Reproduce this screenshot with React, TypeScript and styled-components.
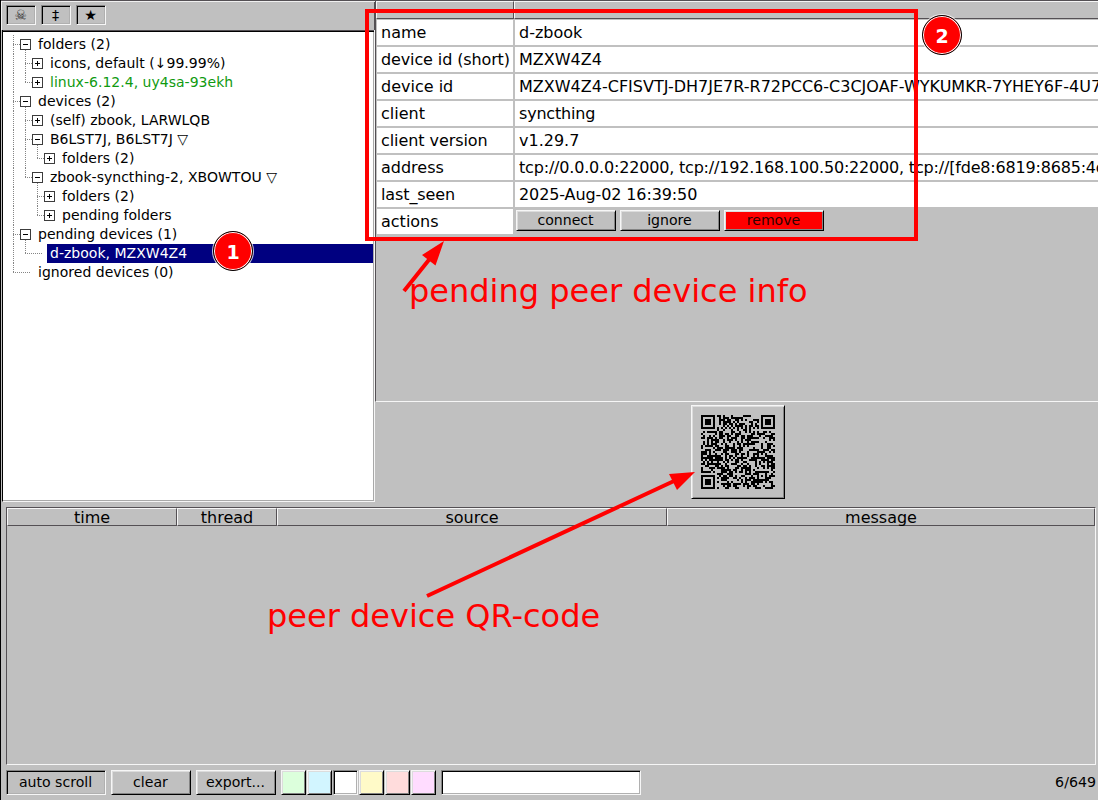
import React from "react";
import styled, { createGlobalStyle, css } from "styled-components";

const Global = createGlobalStyle`
  *, *::before, *::after { box-sizing: border-box; }
  html, body { margin: 0; padding: 0; }
  body { background: #c0c0c0; overflow: hidden; font-family: "DejaVu Sans", sans-serif; color: #000; }
`;

const raised = css`
  border: 1px solid;
  border-color: #f6f6f6 #000 #000 #f6f6f6;
  box-shadow: inset 1px 1px #dcdcdc, inset -1px -1px #848484;
`;
const sunken = css`
  border: 1px solid;
  border-color: #848484 #f6f6f6 #f6f6f6 #848484;
  box-shadow: inset 1px 1px #000, inset -1px -1px #b0b0b0;
`;

const Window = styled.div`
  position: relative;
  width: 1098px;
  height: 800px;
  overflow: hidden;
  background: #c0c0c0;
  border-left: 1px solid #000;
  display: flex;
  flex-direction: column;
`;
const Upper = styled.div`
  display: flex;
  height: 502px;
  flex: none;
`;
const Left = styled.div`
  width: 374px;
  flex: none;
  display: flex;
  flex-direction: column;
`;
const Toolbar = styled.div`
  height: 30px;
  border-top: 1px solid #545054;
  box-shadow: inset 1px 1px #f0f0f0, inset -1px 0 #545054;
  padding: 4px 0 0 5px;
  display: flex;
  gap: 5px;
`;
const ToolButton = styled.div<{ $dim?: boolean }>`
  ${sunken}
  width: 30px;
  height: 20px;
  padding-right: 1px;
  font-size: 14.2px;
  line-height: 18px;
  text-align: center;
  color: ${(p) => (p.$dim ? "#333" : "#000")};
`;
const Tree = styled.div`
  flex: 1;
  margin-left: 1px;
  background: #fff;
  border: 1px solid;
  border-color: #000 #f6f6f6 #f6f6f6 #000;
  border-top: 0;
  box-shadow: inset 0 1px #545054, inset 0 2px #000, inset -1px -1px #a9a9a9;
  padding: 5px 1px 1px 0;
`;
const TreeRow = styled.div`
  display: flex;
  align-items: center;
  height: 19px;
  padding-left: 10px;
`;
const dotsV = "repeating-linear-gradient(180deg,#858585 0 1px,transparent 1px 2px)";
const dotsH = "repeating-linear-gradient(90deg,#858585 0 1px,transparent 1px 2px)";
const Guide = styled.span<{ $kind: string }>`
  width: 12px;
  height: 19px;
  flex: none;
  background-repeat: no-repeat;
  background-image: ${dotsV}, ${dotsH};
  background-position: 0 0, 0 9px;
  background-size: 1px ${(p) => (p.$kind === "pipe" || p.$kind === "tee" ? 19 : p.$kind === "end" ? 10 : 0)}px,
    ${(p) => (p.$kind === "tee" || p.$kind === "end" ? "12px" : "0")} 1px;
`;
const Toggle = styled.span<{ $open: boolean }>`
  position: relative;
  width: 11px;
  height: 11px;
  flex: none;
  margin: 0 4px 0 -5px;
  border: 1px solid #3c3c3c;
  background:
    linear-gradient(#000, #000) center / 5px 1px no-repeat,
    linear-gradient(#000, #000) center / 1px ${(p) => (p.$open ? 1 : 5)}px no-repeat,
    #fff;
  &::after {
    content: "";
    display: ${(p) => (p.$open ? "block" : "none")};
    position: absolute;
    left: 4px;
    top: 10px;
    width: 1px;
    height: 4px;
    background: ${dotsV};
  }
`;
const LeafLine = styled.span`
  width: 6px;
  height: 1px;
  flex: none;
  margin-right: 4px;
  background: ${dotsH};
`;
const Label = styled.span<{ $selected?: boolean; $synced?: boolean }>`
  flex: 1;
  height: 19px;
  line-height: 19px;
  padding-left: 3px;
  font-size: 14px;
  letter-spacing: 0.02px;
  white-space: pre;
  color: ${(p) => (p.$selected ? "#fff" : p.$synced ? "#109a10" : "#000")};
  background: ${(p) => (p.$selected ? "#000080" : "transparent")};
`;

const Right = styled.div`
  flex: 1;
  min-width: 0;
  display: flex;
  flex-direction: column;
`;
const Details = styled.div`
  height: 402px;
  border-top: 1px solid #545054;
  border-left: 1px solid #545054;
  border-bottom: 1px solid #f6f6f6;
`;
const DetailsHead = styled.div`
  display: grid;
  grid-template-columns: 138px 1fr;
  height: 18px;
`;
const HeadCell = styled.div<{ $last?: boolean }>`
  height: 18px;
  border: 1px solid;
  border-color: #f6f6f6 #545054 #545054 #f6f6f6;
  border-right-width: ${(p) => (p.$last ? 0 : 1)}px;
  font-size: 16px;
  line-height: 17px;
  text-align: center;
`;
const DetailsBody = styled.div`
  display: grid;
  grid-template-columns: 136px 1fr;
  grid-auto-rows: 25px;
  gap: 2px;
  padding: 1px 0 0 1px;
`;
const Cell = styled.div<{ $track?: number }>`
  background: #fff;
  padding-left: 4px;
  font-size: 16px;
  line-height: 25px;
  letter-spacing: ${(p) => p.$track ?? 0}px;
  white-space: nowrap;
  overflow: hidden;
`;
const Actions = styled.div`
  display: flex;
  gap: 4px;
  padding: 1px 0 0 1px;
`;
const Button = styled.div<{ $w: number; $h: number; $danger?: boolean; $pressed?: boolean }>`
  ${(p) => (p.$pressed ? sunken : raised)}
  width: ${(p) => p.$w}px;
  height: ${(p) => p.$h}px;
  line-height: ${(p) => p.$h - 3}px;
  padding-right: 1px;
  background: ${(p) => (p.$danger ? "#f00" : "#c0c0c0")};
  color: ${(p) => (p.$danger ? "#300000" : "#000")};
  font-size: 14.1px;
  text-align: center;
`;
const QrArea = styled.div`
  flex: 1;
  padding: 3px 0 0 316px;
`;
const QrFrame = styled.div`
  ${raised}
  width: 94px;
  height: 94px;
  padding: 9px;
  svg { display: block; }
`;

const Log = styled.div`
  margin: 5px 2px 0 5px;
  height: 258px;
  flex: none;
  border: 1px solid;
  border-color: #545054 #f6f6f6 #f6f6f6 #545054;
`;
const LogHead = styled.div`
  display: grid;
  grid-template-columns: 170px 100px 390px 1fr;
  height: 18px;
`;
const Footer = styled.div`
  display: flex;
  align-items: center;
  gap: 5px;
  height: 25px;
  margin: 5px 2px 0 5px;
`;
const Swatches = styled.div`
  display: flex;
  gap: 1px;
`;
const Swatch = styled.div<{ $color: string; $pressed?: boolean }>`
  ${(p) => (p.$pressed ? sunken : raised)}
  width: 25px;
  height: 25px;
  background: ${(p) => p.$color};
`;
const Filter = styled.div`
  ${sunken}
  width: 200px;
  height: 25px;
  background: #fff;
`;
const Counter = styled.div`
  margin-left: auto;
  padding-bottom: 1px;
  font-size: 14.2px;
`;

const Marks = styled.div`
  position: absolute;
  inset: 0 0 0 -1px;
  color: #f00;
`;
const Outline = styled.div`
  position: absolute;
  left: 365px;
  top: 9px;
  width: 553px;
  height: 232px;
  border: 4px solid #f00;
`;
const Badge = styled.div<{ $x: number; $y: number }>`
  position: absolute;
  left: ${(p) => p.$x}px;
  top: ${(p) => p.$y}px;
  width: 40px;
  height: 40px;
  border-radius: 50%;
  background: #f00;
  border: 1px solid #000;
  box-shadow: 0 0 0 1px rgba(255, 255, 255, 0.75), inset 0 0 0 1px #fff;
  color: #fff;
  font-size: 19px;
  font-weight: bold;
  line-height: 40px;
  text-align: center;
`;
const Note = styled.div<{ $x: number; $y: number }>`
  position: absolute;
  left: ${(p) => p.$x}px;
  top: ${(p) => p.$y}px;
  font-size: 32px;
  line-height: 40px;
  white-space: nowrap;
`;
const Arrows = styled.svg`
  position: absolute;
  left: 0;
  top: 0;
`;

type Node = { text: string; guides: string[]; open?: boolean; leaf?: boolean; selected?: boolean; synced?: boolean };
const nodes: Node[] = [
  { text: "folders (2)", guides: ["tee"], open: true },
  { text: "icons, default (↓99.99%)", guides: ["pipe", "tee"] },
  { text: "linux-6.12.4, uy4sa-93ekh", guides: ["pipe", "end"], synced: true },
  { text: "devices (2)", guides: ["tee"], open: true },
  { text: "(self) zbook, LARWLQB", guides: ["pipe", "tee"] },
  { text: "B6LST7J, B6LST7J ▽", guides: ["pipe", "tee"], open: true },
  { text: "folders (2)", guides: ["pipe", "pipe", "end"] },
  { text: "zbook-syncthing-2, XBOWTOU ▽", guides: ["pipe", "end"], open: true },
  { text: "folders (2)", guides: ["pipe", "none", "tee"] },
  { text: "pending folders", guides: ["pipe", "none", "end"] },
  { text: "pending devices (1)", guides: ["tee"], open: true },
  { text: "d-zbook, MZXW4Z4", guides: ["pipe", "end"], leaf: true, selected: true },
  { text: "ignored devices (0)", guides: ["end"], leaf: true },
];

type Detail = { name: string; value: string; nameTrack?: number; valueTrack?: number };
const details: Detail[] = [
  { name: "name", value: "d-zbook" },
  { name: "device id (short)", value: "MZXW4Z4", nameTrack: -0.12 },
  { name: "device id", value: "MZXW4Z4-CFISVTJ-DH7JE7R-R72PCC6-C3CJOAF-WYKUMKR-7YHEY6F-4U7", valueTrack: 0.01 },
  { name: "client", value: "syncthing", valueTrack: -0.2 },
  { name: "client version", value: "v1.29.7", nameTrack: -0.07 },
  { name: "address", value: "tcp://0.0.0.0:22000, tcp://192.168.100.50:22000, tcp://[fde8:6819:8685:4d", valueTrack: -0.185 },
  { name: "last_seen", value: "2025-Aug-02 16:39:50", nameTrack: -0.1, valueTrack: -0.11 },
];

const QR_SIZE = 37;
function qrPath() {
  let seed = 7411;
  let d = "";
  const ring = (x: number, y: number, cx: number, cy: number) => Math.max(Math.abs(x - cx), Math.abs(y - cy));
  for (let y = 0; y < QR_SIZE; y++) {
    for (let x = 0; x < QR_SIZE; x++) {
      seed = (seed * 48271) % 2147483647;
      let on = seed / 2147483647 < 0.51;
      if (x === 6 || y === 6) on = (x + y) % 2 === 0;
      const align = ring(x, y, 30, 30);
      if (align <= 2) on = align !== 1;
      for (const [cx, cy] of [[3, 3], [33, 3], [3, 33]]) {
        const r = ring(x, y, cx, cy);
        if (r <= 4) on = r === 3 || r <= 1;
      }
      if (on) d += `M${x} ${y}h1v1h-1z`;
    }
  }
  return d;
}

export default function App() {
  return (
    <>
      <Global />
      <Window>
        <Upper>
          <Left>
            <Toolbar>
              <ToolButton $dim>☠</ToolButton>
              <ToolButton>‡</ToolButton>
              <ToolButton>★</ToolButton>
            </Toolbar>
            <Tree>
              {nodes.map((n, i) => (
                <TreeRow key={i}>
                  {n.guides.map((g, j) => <Guide key={j} $kind={g} />)}
                  {n.leaf ? <LeafLine /> : <Toggle $open={!!n.open} />}
                  <Label $selected={n.selected} $synced={n.synced}>{n.text}</Label>
                </TreeRow>
              ))}
            </Tree>
          </Left>
          <Right>
            <Details>
              <DetailsHead>
                <HeadCell />
                <HeadCell $last />
              </DetailsHead>
              <DetailsBody>
                {details.map((row) => (
                  <React.Fragment key={row.name}>
                    <Cell $track={row.nameTrack}>{row.name}</Cell>
                    <Cell $track={row.valueTrack}>{row.value}</Cell>
                  </React.Fragment>
                ))}
                <Cell>actions</Cell>
                <Actions>
                  <Button $w={100} $h={21}>connect</Button>
                  <Button $w={100} $h={21}>ignore</Button>
                  <Button $w={100} $h={21} $danger>remove</Button>
                </Actions>
              </DetailsBody>
            </Details>
            <QrArea>
              <QrFrame>
                <svg width="74" height="74" viewBox="0 0 37 37" shapeRendering="crispEdges">
                  <path d={qrPath()} />
                </svg>
              </QrFrame>
            </QrArea>
          </Right>
        </Upper>
        <Log>
          <LogHead>
            <HeadCell>time</HeadCell>
            <HeadCell>thread</HeadCell>
            <HeadCell>source</HeadCell>
            <HeadCell>message</HeadCell>
          </LogHead>
        </Log>
        <Footer>
          <Button $w={100} $h={25} $pressed>auto scroll</Button>
          <Button $w={80} $h={25}>clear</Button>
          <Button $w={80} $h={25}>export...</Button>
          <Swatches>
            <Swatch $color="#dcffdc" />
            <Swatch $color="#d2f5ff" />
            <Swatch $color="#fff" $pressed />
            <Swatch $color="#fffac8" />
            <Swatch $color="#ffdcdc" />
            <Swatch $color="#ffdcff" />
          </Swatches>
          <Filter />
          <Counter>6/649</Counter>
        </Footer>
        <Marks>
          <Outline />
          <Arrows width="1098" height="800" fill="#f00" stroke="#f00">
            <path d="M404 291L432 256M427 596L674 481" strokeWidth="4" fill="none" />
            <path d="M444 241L422 255L435.500 265.500ZM695 472L669 474L677 490Z" stroke="none" />
          </Arrows>
          <Note $x={409} $y={271}>pending peer device info</Note>
          <Note $x={267} $y={596}>peer device QR-code</Note>
          <Badge $x={213} $y={231}>1</Badge>
          <Badge $x={922} $y={15}>2</Badge>
        </Marks>
      </Window>
    </>
  );
}
